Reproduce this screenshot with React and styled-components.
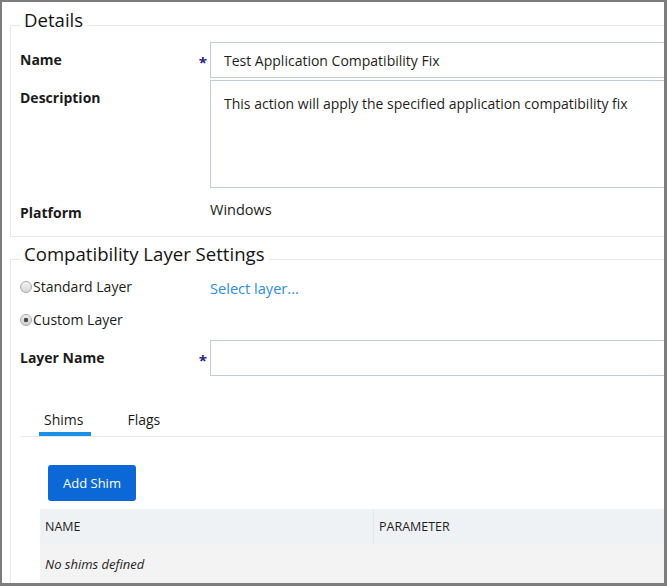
import React from 'react';
import styled, { createGlobalStyle } from 'styled-components';

const GlobalStyle = createGlobalStyle`
    body {
        margin: 0;
        font-family: "Open Sans", "Noto Sans", sans-serif;
        color: #1b1b1b;
    }
`;

const Frame = styled.div`
    width: 667px;
    height: 586px;
    box-sizing: border-box;
    border-style: solid;
    border-color: #7d7d7d;
    border-width: 2px 3px 3px 2px;
    background: #fff;
    overflow: hidden;
`;

const Content = styled.div`
    width: 740px;
    padding-left: 8px;
`;

const Fieldset = styled.fieldset`
    margin: ${p => p.$top || 0}px 0 0 0;
    border: 1px solid #e4e9ee;
    padding: ${p => p.$pad || 2}px 0 ${p => p.$bottom || 0}px 9px;
    min-width: 0;
`;

const Legend = styled.legend`
    font-size: 18.6px;
    line-height: 19px;
    font-weight: 400;
    color: #141414;
    padding: 0 4px 11px;
`;

const FormRow = styled.div`
    display: grid;
    grid-template-columns: 190px 1fr;
    margin-top: ${p => p.$top || 0}px;
`;

const LabelCell = styled.div`
    display: flex;
    justify-content: space-between;
    padding-right: 3px;
`;

const Label = styled.div`
    font-size: 14px;
    font-weight: 700;
    line-height: 20px;
    padding-top: 8px;
`;

const Required = styled.span`
    color: #23238c;
    font-size: 15px;
    font-weight: 700;
    line-height: 1;
    padding-top: 13px;
`;

const TextInput = styled.input`
    display: block;
    box-sizing: border-box;
    width: 100%;
    height: 36px;
    border: 1px solid #bfcbd8;
    padding: 0 13px;
    font: 14px "Open Sans", sans-serif;
    color: #1e1e1e;
    outline: none;
`;

const TextArea = styled.textarea`
    display: block;
    box-sizing: border-box;
    width: 100%;
    height: 108px;
    border: 1px solid #bfcbd8;
    padding: 12px 13px;
    font: 14px/22px "Open Sans", sans-serif;
    color: #1e1e1e;
    resize: none;
    outline: none;
`;

const Value = styled.div`
    font-size: 14.5px;
    line-height: 20px;
    padding-top: 5px;
`;

const RadioList = styled.div`
    display: flex;
    flex-direction: column;
    gap: 13px;
`;

const RadioItem = styled.label`
    display: flex;
    align-items: center;
    font-size: 14px;
    line-height: 20px;
`;

const Radio = styled.span`
    width: 12px;
    height: 12px;
    box-sizing: border-box;
    border-radius: 50%;
    border: 1px solid #a8a8a8;
    margin-right: 1px;
    background: ${p => p.$checked
        ? 'radial-gradient(circle, #4a4a4a 0 2px, transparent 2.6px), linear-gradient(#f0f0f0, #d2d2d2)'
        : 'linear-gradient(#f4f4f4, #d6d6d6)'};
`;

const Link = styled.a`
    color: #2b8de4;
    font-size: 14.6px;
    line-height: 20px;
    padding-top: 7px;
    text-decoration: none;
`;

const TabBar = styled.div`
    display: flex;
    gap: 31px;
    margin-top: 34px;
    padding-left: 19px;
    border-bottom: 1px solid #e6ebf0;
`;

const Tab = styled.div`
    font-size: 14px;
    line-height: 20px;
    padding: 0 8px 2px 5px;
    color: #1b1b1b;
    border-bottom: 4px solid ${p => (p.$active ? '#1a8fe6' : 'transparent')};
`;

const Panel = styled.div`
    padding: 28px 0 0 20px;
`;

const Button = styled.button`
    display: block;
    height: 36px;
    margin-left: 8px;
    padding: 0 15px;
    border: none;
    border-radius: 3px;
    background: #0b68d6;
    color: #fff;
    font: 13px "Open Sans", sans-serif;
`;

const Table = styled.table`
    width: 700px;
    margin-top: 8px;
    border-collapse: collapse;
    border-bottom: 1px solid #cfe2f2;
`;

const Th = styled.th`
    height: 35px;
    padding: 0 5px;
    text-align: left;
    font-size: 12.5px;
    font-weight: 400;
    text-transform: uppercase;
    background: #eef2f5;
    color: #1e1e1e;
    width: ${p => p.$width || 'auto'};
    border-right: 1px solid #e3e8ed;
`;

const Td = styled.td`
    height: 39px;
    padding: 0 5px;
    background: #f3f3f3;
    font-size: 13px;
    font-style: italic;
    color: #1e1e1e;
`;

export default function App() {
    return (
        <Frame>
            <GlobalStyle />
            <Content>
                <Fieldset $top={8} $bottom={13}>
                    <Legend>Details</Legend>
                    <FormRow>
                        <LabelCell>
                            <Label>Name</Label>
                            <Required>*</Required>
                        </LabelCell>
                        <TextInput defaultValue="Test Application Compatibility Fix" readOnly />
                    </FormRow>
                    <FormRow $top={2}>
                        <LabelCell>
                            <Label>Description</Label>
                        </LabelCell>
                        <TextArea
                            defaultValue="This action will apply the specified application compatibility fix"
                            readOnly
                        />
                    </FormRow>
                    <FormRow $top={7}>
                        <LabelCell>
                            <Label>Platform</Label>
                        </LabelCell>
                        <Value>Windows</Value>
                    </FormRow>
                </Fieldset>

                <Fieldset $top={7} $pad={3} $bottom={40}>
                    <Legend>Compatibility Layer Settings</Legend>
                    <FormRow>
                        <RadioList>
                            <RadioItem>
                                <Radio />
                                Standard Layer
                            </RadioItem>
                            <RadioItem>
                                <Radio $checked />
                                Custom Layer
                            </RadioItem>
                        </RadioList>
                        <div>
                            <Link href="#">Select layer...</Link>
                        </div>
                    </FormRow>
                    <FormRow $top={10}>
                        <LabelCell>
                            <Label>Layer Name</Label>
                            <Required>*</Required>
                        </LabelCell>
                        <TextInput readOnly />
                    </FormRow>

                    <TabBar>
                        <Tab $active>Shims</Tab>
                        <Tab>Flags</Tab>
                    </TabBar>
                    <Panel>
                        <Button>Add Shim</Button>
                        <Table>
                            <thead>
                                <tr>
                                    <Th $width="323px">Name</Th>
                                    <Th>Parameter</Th>
                                </tr>
                            </thead>
                            <tbody>
                                <tr>
                                    <Td colSpan={2}>No shims defined</Td>
                                </tr>
                            </tbody>
                        </Table>
                    </Panel>
                </Fieldset>
            </Content>
        </Frame>
    );
}
